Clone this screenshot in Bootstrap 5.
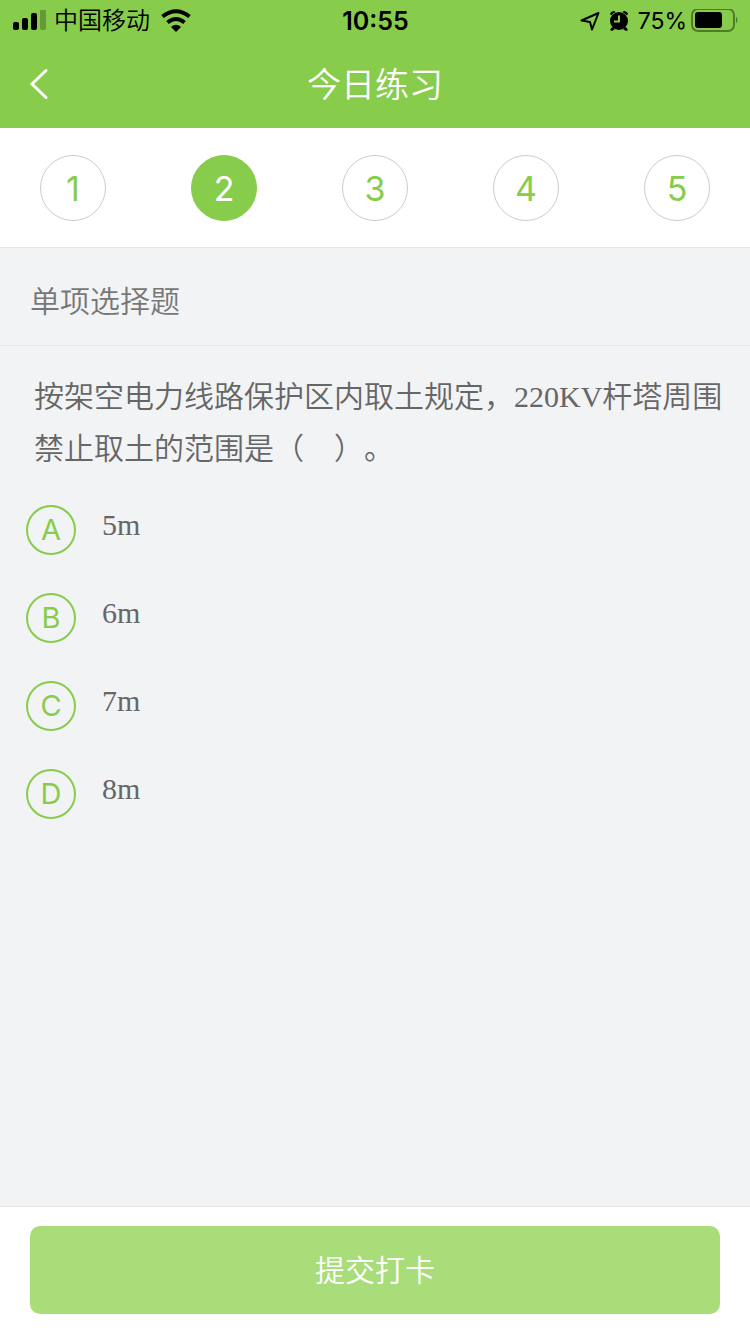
<!DOCTYPE html>
<html lang="zh-CN">
<head>
<meta charset="utf-8">
<meta name="viewport" content="width=device-width, initial-scale=1">
<title>今日练习</title>
<link href="https://cdn.jsdelivr.net/npm/bootstrap@5.3.0/dist/css/bootstrap.min.css" rel="stylesheet">
<style>
  :root { --leaf: #87cc4b; --line: #e4e5e7; }
  body { font-family: Inter, "Noto Sans CJK SC", sans-serif; font-size: 30px; background: #f2f3f5; color: #666; }
  .app-top { background: var(--leaf); }
  .status-bar { height: 42px; font-size: 24px; line-height: 42px; color: #000; padding: 0 11px 0 12px; }
  .carrier { font-weight: 350; }
  .clock { font-size: 25px; font-weight: 600; }
  .charge { font-size: 23px; }
  .title-bar { height: 86px; padding: 0 26px; }
  .title-bar h1 { font-size: 34px; font-weight: 350; line-height: 86px; }
  .side-slot { flex: 1 0 0; }
  .steps { padding: 27px 40px 26px; border-bottom: 1px solid var(--line); }
  .step { width: 66px; height: 66px; font-size: 34px; color: var(--leaf); border: 1px solid #ccc; text-decoration: none; }
  .step.current { background: var(--leaf); border-color: var(--leaf); color: #fff; }
  .kind { font-size: 30px; font-weight: 350; line-height: 45px; padding: 31px 30px 21px; border-bottom: 1px solid var(--line); color: #777; }
  .question, .answer { font-family: "Liberation Serif", "Noto Sans CJK SC", serif; }
  .question { font-size: 30px; line-height: 52px; padding: 25px 20px 30px 34px; font-weight: 350; text-spacing-trim: space-all; font-feature-settings: "chws" 0, "halt" 0; }
  .choices { padding: 0 26px; gap: 38px; }
  .choice { gap: 26px; cursor: pointer; }
  .letter { width: 50px; height: 50px; border: 2px solid var(--leaf); color: var(--leaf); font-size: 29px; }
  .btn-check:checked + .choice .letter { background: var(--leaf); color: #fff; }
  .answer { line-height: 40px; }
  .submit-bar { padding: 19px 30px 20px; border-top: 1px solid var(--line); }
  .submit { font-size: 30px; font-weight: 350; line-height: 88px; padding: 0; border: 0; border-radius: 10px; }
  .submit, .submit:hover { background: #a9dd79; color: #fff; }
</style>
</head>
<body class="d-flex flex-column min-vh-100">
<header class="app-top">
  <div class="status-bar d-flex align-items-center">
    <div class="side-slot d-flex align-items-center">
      <svg width="34" height="22" viewBox="0 0 34 22" aria-hidden="true"><rect x="1" y="12" width="6" height="8" rx="2"/><rect x="10" y="8" width="6" height="12" rx="2"/><rect x="19" y="3" width="6" height="17" rx="2"/><rect x="28" y="-1" width="6" height="21" rx="2" opacity=".25"/></svg>
      <span class="carrier ms-2">中国移动</span>
      <svg class="ms-2" width="36" height="24" viewBox="-1 1 36 24" fill="none" stroke="#000" aria-hidden="true"><g stroke-width="4"><path d="M3.500 8.500Q17 -2 30.500 8.500"/><path d="M8.500 14.500Q17 7.500 25.500 14.500"/></g><path d="M12 19Q17 14.500 22 19L17 24Z" fill="#000" stroke="none"/></svg>
    </div>
    <span class="clock">10:55</span>
    <div class="side-slot d-flex align-items-center justify-content-end">
      <svg width="20" height="20" viewBox="0 0 20 20" fill="none" stroke="#000" stroke-width="2" stroke-linejoin="round" aria-hidden="true"><path d="M1.500 9.500L18.500 2L12 18.500L10 11Z"/></svg>
      <svg class="ms-2" width="22" height="22" viewBox="0 0 22 22" aria-hidden="true"><circle cx="11" cy="11" r="9"/><path d="M2 3.500Q3 1 6 1L7.500 2L3 5.500ZM20 3.500Q19 1 16 1L14.500 2L19 5.500ZM4 17L2 20L4 21L7 19ZM18 17L20 20L18 21L15 19Z"/><path d="M11 5.500V11.500H6" fill="none" stroke="#87cc4b" stroke-width="2"/></svg>
      <span class="charge ms-2">75%</span>
      <svg class="ms-1" width="48" height="24" viewBox="0 1 48 24" aria-hidden="true"><rect x="1" y="1" width="42" height="22" rx="6" fill="none" stroke="#000" stroke-width="2" opacity=".4"/><rect x="4" y="4" width="27" height="16" rx="3"/><path d="M45 8.500Q48 12 45 15.500Z" opacity=".4"/></svg>
    </div>
  </div>
  <div class="title-bar d-flex align-items-center text-white">
    <div class="side-slot d-flex">
      <button class="btn p-0 border-0 text-white d-flex" type="button" aria-label="返回"><svg width="26" height="34" viewBox="0 0 26 34" fill="none" stroke="currentColor" stroke-width="3" stroke-linecap="round"><path d="M20 2.500L6 16L20 29.500"/></svg></button>
    </div>
    <h1 class="m-0">今日练习</h1>
    <div class="side-slot"></div>
  </div>
</header>
<nav class="steps bg-white d-flex justify-content-between" aria-label="题目">
  <a class="step rounded-circle d-flex align-items-center justify-content-center" href="#q1">1</a>
  <a class="step current rounded-circle d-flex align-items-center justify-content-center" href="#q2" aria-current="step">2</a>
  <a class="step rounded-circle d-flex align-items-center justify-content-center" href="#q3">3</a>
  <a class="step rounded-circle d-flex align-items-center justify-content-center" href="#q4">4</a>
  <a class="step rounded-circle d-flex align-items-center justify-content-center" href="#q5">5</a>
</nav>
<main class="flex-grow-1" id="q2">
  <h2 class="kind m-0">单项选择题</h2>
  <p class="question m-0">按架空电力线路保护区内取土规定，220KV杆塔周围禁止取土的范围是（　）。</p>
  <div class="choices d-flex flex-column">
    <div class="d-flex"><input class="btn-check" type="radio" name="answer" id="a"><label class="choice d-flex" for="a"><span class="letter rounded-circle d-flex align-items-center justify-content-center">A</span><span class="answer">5m</span></label></div>
    <div class="d-flex"><input class="btn-check" type="radio" name="answer" id="b"><label class="choice d-flex" for="b"><span class="letter rounded-circle d-flex align-items-center justify-content-center">B</span><span class="answer">6m</span></label></div>
    <div class="d-flex"><input class="btn-check" type="radio" name="answer" id="c"><label class="choice d-flex" for="c"><span class="letter rounded-circle d-flex align-items-center justify-content-center">C</span><span class="answer">7m</span></label></div>
    <div class="d-flex"><input class="btn-check" type="radio" name="answer" id="d"><label class="choice d-flex" for="d"><span class="letter rounded-circle d-flex align-items-center justify-content-center">D</span><span class="answer">8m</span></label></div>
  </div>
</main>
<footer class="submit-bar bg-white">
  <button class="submit btn w-100 d-block" type="button">提交打卡</button>
</footer>
<script src="https://cdn.jsdelivr.net/npm/bootstrap@5.3.0/dist/js/bootstrap.bundle.min.js"></script>
</body>
</html>
